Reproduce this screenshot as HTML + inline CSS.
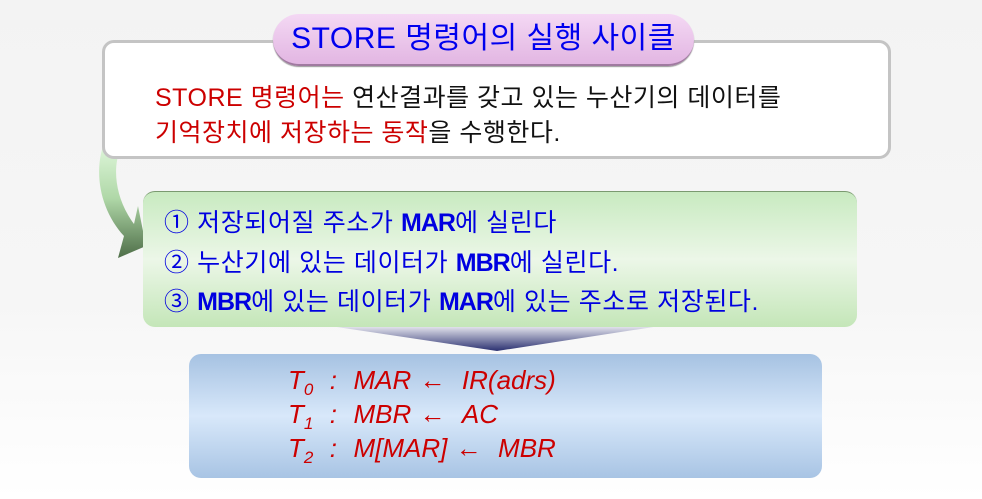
<!DOCTYPE html>
<html><head><meta charset="utf-8"><style>
body{margin:0;width:982px;height:499px;overflow:hidden;background:linear-gradient(#f3f3f3,#f6f6f6 60%,#fff);font-family:"Liberation Sans","Noto Sans CJK KR",sans-serif;position:relative}
.a{position:absolute}
.wb{left:102px;top:40px;width:783px;height:113px;background:#fff;border:3px solid #c4c4c4;border-radius:12px}
.pill{left:273px;top:14px;width:421px;height:50px;border-radius:26px;background:linear-gradient(#f4d8f4,#e2b6e2);border-bottom:2px solid #a07aa0;box-shadow:0 1px 1px #999;text-align:center;line-height:50px;font-size:30px;color:#0000ee;letter-spacing:0.5px}
.t{font-size:25px;white-space:nowrap;color:#111;letter-spacing:0.5px}
.r{color:#c00}
.gb{left:143px;top:191px;width:714px;height:135px;border-radius:12px;background:linear-gradient(#c8eac0,#ecf7e8 50%,#c4e6b8);border-top:1px solid #7a9a70}
.g{font-size:25px;color:#0000e0;white-space:nowrap;letter-spacing:0.6px}
.g b{letter-spacing:-1px}
.bb{left:189px;top:354px;width:633px;height:124px;border-radius:12px;background:linear-gradient(#a6c2e2,#d8e8fa 50%,#a8c4e4)}
.e{font-size:26px;font-style:italic;color:#c00;white-space:nowrap;word-spacing:1px}
sub{font-size:17px}
</style></head><body>
<svg class="a" style="left:0;top:0" width="982" height="499">
<defs><linearGradient id="ag" x1="0" y1="0" x2="0" y2="1"><stop offset="0" stop-color="#e4fae0"/><stop offset=".5" stop-color="#b0d8a8"/><stop offset="1" stop-color="#4e6e48"/></linearGradient>
<linearGradient id="fg" x1="0" y1="0" x2="0" y2="1"><stop offset="0" stop-color="#e8e8f0"/><stop offset="1" stop-color="#2a3070"/></linearGradient></defs>
<path d="M106 138 C92 170 100 210 124 236 L118 258 L146 246 L138 206 L134 224 C116 200 112 170 120 150 Z" fill="url(#ag)"/>
<path d="M330 326 L660 326 L497 351 Z" fill="url(#fg)"/>
</svg>
<div class="a wb"></div>
<div class="a pill">STORE 명령어의 실행 사이클</div>
<div class="a t" style="left:155px;top:78px"><span class="r">STORE 명령어는</span> 연산결과를 갖고 있는 누산기의 데이터를</div>
<div class="a t" style="left:155px;top:113px"><span class="r">기억장치에 저장하는 동작</span>을 수행한다.</div>
<div class="a gb"></div>
<div class="a g" style="left:164px;top:203px">① 저장되어질 주소가 <b>MAR</b>에 실린다</div>
<div class="a g" style="left:164px;top:243px">② 누산기에 있는 데이터가 <b>MBR</b>에 실린다.</div>
<div class="a g" style="left:164px;top:282px">③ <b>MBR</b>에 있는 데이터가 <b>MAR</b>에 있는 주소로 저장된다.</div>
<div class="a bb"></div>
<div class="a e" style="left:288px;top:365px">T<sub>0</sub> &nbsp;:&nbsp; MAR ← &nbsp;IR(adrs)</div>
<div class="a e" style="left:288px;top:399px">T<sub>1</sub> &nbsp;:&nbsp; MBR ← &nbsp;AC</div>
<div class="a e" style="left:288px;top:433px">T<sub>2</sub> &nbsp;:&nbsp; M[MAR] ← &nbsp;MBR</div>
</body></html>
